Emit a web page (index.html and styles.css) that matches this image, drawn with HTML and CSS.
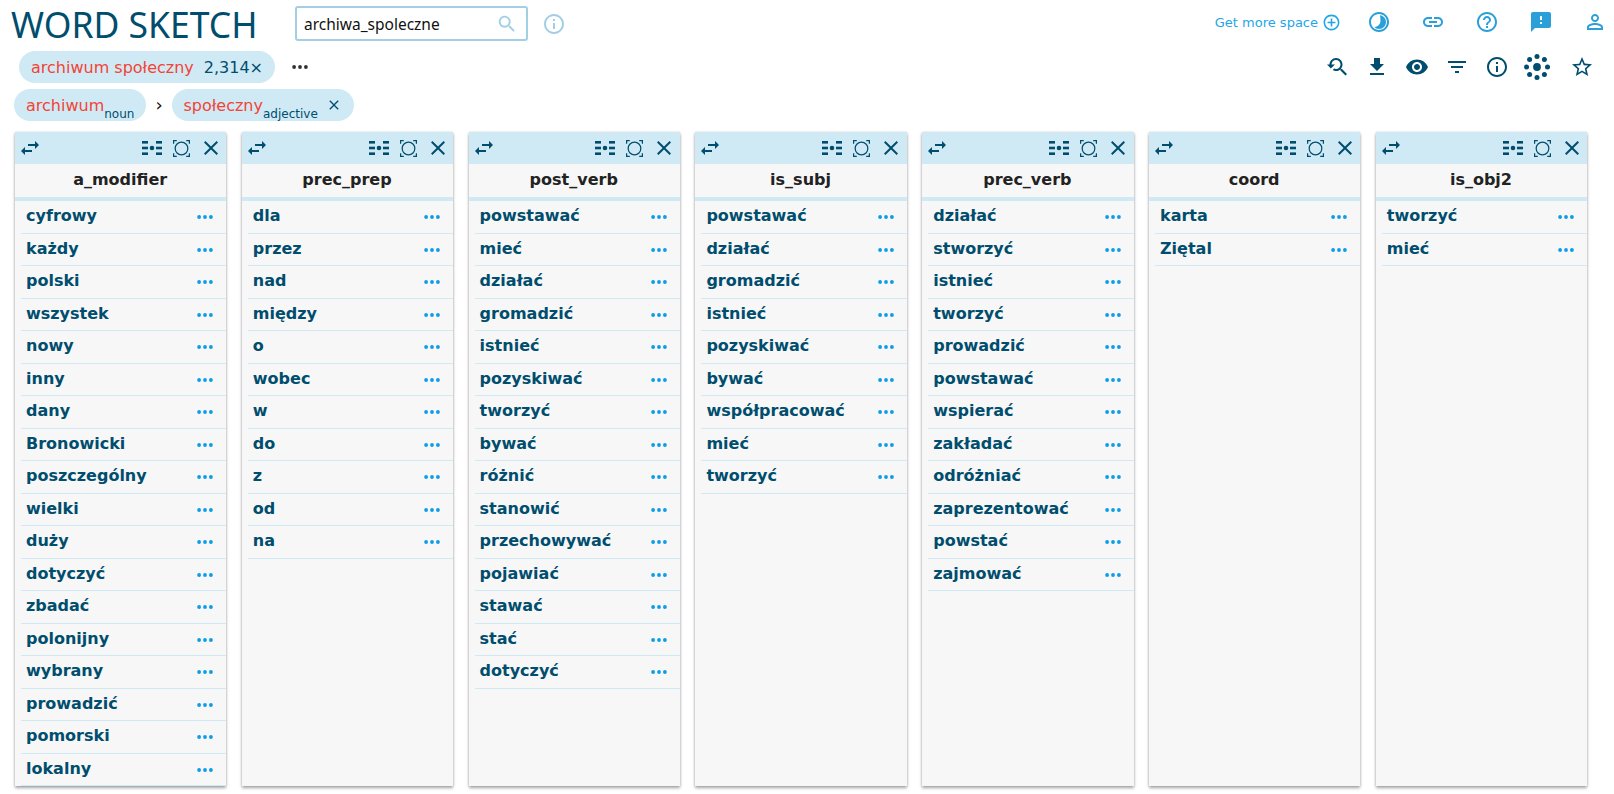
FILE: index.html
```html
<!DOCTYPE html>
<html lang="pl">
<head>
<meta charset="utf-8">
<title>Word Sketch</title>
<link rel="stylesheet" href="styles.css">
</head>
<body>
<svg class="defs" width="0" height="0">
  <symbol id="i-search" viewBox="0 0 24 24"><path d="M15.5 14h-.79l-.28-.27C15.41 12.59 16 11.11 16 9.5 16 5.91 13.09 3 9.5 3S3 5.91 3 9.5 5.91 16 9.5 16c1.61 0 3.09-.59 4.23-1.57l.27.28v.79l5 4.99L20.49 19l-4.99-5zm-6 0C7.01 14 5 11.99 5 9.5S7.01 5 9.5 5 14 7.01 14 9.5 11.99 14 9.5 14z"/></symbol>
  <symbol id="i-info" viewBox="0 0 24 24"><path d="M11 7h2v2h-2zm0 4h2v6h-2zm1-9C6.48 2 2 6.48 2 12s4.48 10 10 10 10-4.48 10-10S17.52 2 12 2zm0 18c-4.41 0-8-3.59-8-8s3.59-8 8-8 8 3.59 8 8-3.59 8-8 8z"/></symbol>
  <symbol id="i-add" viewBox="0 0 24 24"><path d="M13 7h-2v4H7v2h4v4h2v-4h4v-2h-4V7zm-1-5C6.48 2 2 6.48 2 12s4.48 10 10 10 10-4.48 10-10S17.52 2 12 2zm0 18c-4.41 0-8-3.59-8-8s3.59-8 8-8 8 3.59 8 8-3.59 8-8 8z"/></symbol>
  <symbol id="i-moon" viewBox="0 0 24 24"><path d="M12 2C6.48 2 2 6.48 2 12s4.48 10 10 10 10-4.48 10-10S17.52 2 12 2zm0 18c-4.41 0-8-3.59-8-8s3.59-8 8-8 8 3.59 8 8-3.59 8-8 8z"/><path d="M13 5.2c3.5.5 6 3.4 6 6.8 0 3.900-3.100 7-7 7-1.900 0-3.600-.7-4.900-1.900 3.500 0 6.400-2.800 6.400-6.300 0-2-.3-3.900-.5-5.600z"/></symbol>
  <symbol id="i-link" viewBox="0 0 24 24"><path d="M3.9 12c0-1.710 1.390-3.100 3.100-3.100h4V7H7c-2.760 0-5 2.240-5 5s2.240 5 5 5h4v-1.900H7c-1.710 0-3.100-1.390-3.100-3.100zM8 13h8v-2H8v2zm9-6h-4v1.900h4c1.710 0 3.100 1.390 3.100 3.100s-1.390 3.100-3.100 3.100h-4V17h4c2.760 0 5-2.240 5-5s-2.240-5-5-5z"/></symbol>
  <symbol id="i-help" viewBox="0 0 24 24"><path d="M11 18h2v-2h-2v2zm1-16C6.480 2 2 6.480 2 12s4.480 10 10 10 10-4.480 10-10S17.520 2 12 2zm0 18c-4.410 0-8-3.590-8-8s3.590-8 8-8 8 3.590 8 8-3.590 8-8 8zm0-14c-2.210 0-4 1.790-4 4h2c0-1.100.9-2 2-2s2 .9 2 2c0 2-3 1.750-3 5h2c0-2.250 3-2.500 3-5 0-2.210-1.790-4-4-4z"/></symbol>
  <symbol id="i-feedback" viewBox="0 0 24 24"><path d="M20 2H4c-1.100 0-1.990.9-1.990 2L2 22l4-4h14c1.100 0 2-.9 2-2V4c0-1.100-.9-2-2-2zm-7 12h-2v-2h2v2zm0-4h-2V6h2v4z"/></symbol>
  <symbol id="i-person" viewBox="0 0 24 24"><path d="M12 5.900c1.160 0 2.100.94 2.100 2.100s-.94 2.100-2.100 2.100S9.900 9.160 9.900 8s.94-2.100 2.100-2.100m0 9c2.970 0 6.100 1.460 6.100 2.100v1.100H5.900V17c0-.64 3.130-2.100 6.100-2.100M12 4C9.790 4 8 5.790 8 8s1.790 4 4 4 4-1.790 4-4-1.790-4-4-4zm0 9c-2.670 0-8 1.340-8 4v3h16v-3c0-2.660-5.330-4-8-4z"/></symbol>
  <symbol id="i-back" viewBox="0 0 24 24"><path d="M17.010 14h-.8l-.27-.27c.98-1.140 1.570-2.610 1.570-4.230 0-3.590-2.910-6.500-6.500-6.500s-6.500 3-6.500 6.500H2l3.840 4 4.160-4H6.510C6.510 7 8.530 5 11.010 5s4.500 2.010 4.500 4.500c0 2.480-2.020 4.500-4.500 4.500-.65 0-1.260-.14-1.820-.38L7.710 15.100c.97.57 2.090.9 3.300.9 1.610 0 3.080-.59 4.220-1.570l.27.27v.79l5.010 5L22 19l-4.990-5z"/></symbol>
  <symbol id="i-download" viewBox="0 0 24 24"><path d="M5 20h14v-2H5v2zM19 9h-4V3H9v6H5l7 7 7-7z"/></symbol>
  <symbol id="i-eye" viewBox="0 0 24 24"><path d="M12 4.500C7 4.500 2.730 7.610 1 12c1.730 4.390 6 7.500 11 7.500s9.270-3.110 11-7.500c-1.730-4.390-6-7.500-11-7.500zM12 17c-2.760 0-5-2.240-5-5s2.240-5 5-5 5 2.240 5 5-2.240 5-5 5zm0-8c-1.660 0-3 1.340-3 3s1.340 3 3 3 3-1.340 3-3-1.340-3-3-3z"/></symbol>
  <symbol id="i-filter" viewBox="0 0 24 24"><path d="M10 18h4v-2h-4v2zM3 6v2h18V6H3zm3 7h12v-2H6v2z"/></symbol>
  <symbol id="i-star" viewBox="0 0 24 24"><path d="M22 9.240l-7.190-.62L12 2 9.190 8.630 2 9.240l5.460 4.730L5.820 21 12 17.270 18.180 21l-1.630-7.030L22 9.240zM12 15.400l-3.760 2.270 1-4.280-3.320-2.880 4.380-.38L12 6.100l1.710 4.040 4.380.38-3.320 2.880 1 4.280L12 15.400z"/></symbol>
  <symbol id="i-bubble" viewBox="0 0 28 28"><circle cx="14" cy="14" r="3.900"/><circle cx="14" cy="3.500" r="2.500"/><circle cx="14" cy="24.500" r="2.500"/><circle cx="3.500" cy="14" r="2.500"/><circle cx="24.500" cy="14" r="2.500"/><circle cx="6.600" cy="6.600" r="2.500"/><circle cx="21.400" cy="6.600" r="2.500"/><circle cx="6.600" cy="21.400" r="2.500"/><circle cx="21.400" cy="21.400" r="2.500"/></symbol>
  <symbol id="i-swap" viewBox="0 0 24 24"><path d="M6.990 11L3 15l3.990 4v-3H14v-2H6.990v-3zM21 9l-3.990-4v3H10v2h7.010v3L21 9z"/></symbol>
  <symbol id="i-close" viewBox="0 0 24 24"><path d="M19 6.410L17.590 5 12 10.590 6.410 5 5 6.410 10.590 12 5 17.590 6.410 19 12 13.410 17.590 19 19 17.590 13.410 12z"/></symbol>
  <symbol id="i-cluster" viewBox="0 0 20 16"><rect x="0" y="1" width="6" height="2.600"/><rect x="0" y="6.700" width="6" height="2.600"/><rect x="0" y="12.400" width="6" height="2.600"/><rect x="14" y="1" width="6" height="2.600"/><rect x="14" y="6.700" width="6" height="2.600"/><rect x="14" y="12.400" width="6" height="2.600"/><circle cx="10" cy="8" r="2.300"/></symbol>
  <symbol id="i-focus" viewBox="0 0 18 18"><circle cx="9" cy="9" r="6.700" fill="none" stroke="currentColor" stroke-width="1.300"/><path d="M0 0h4v1.300H1.300V4H0zM14 0h4v4h-1.300V1.300H14zM0 14h1.300v2.700H4V18H0zM16.700 14H18v4h-4v-1.300h2.700z"/></symbol>
  <symbol id="i-dots" viewBox="0 0 16 4"><circle cx="2.100" cy="2" r="1.900"/><circle cx="8" cy="2" r="1.900"/><circle cx="13.900" cy="2" r="1.900"/></symbol>
</svg>

<header class="top">
  <h1 class="title">WORD SKETCH</h1>
  <div class="search">
    <span class="search-text">archiwa_spoleczne</span>
    <svg class="ic ic-search"><use href="#i-search"/></svg>
  </div>
  <svg class="ic ic-hint"><use href="#i-info"/></svg>
  <nav class="top-nav">
    <a class="space">Get more space <svg class="ic ic-add"><use href="#i-add"/></svg></a>
    <span class="nav-cell"><svg class="ic ic-nav"><use href="#i-moon"/></svg></span>
    <span class="nav-cell"><svg class="ic ic-nav"><use href="#i-link"/></svg></span>
    <span class="nav-cell"><svg class="ic ic-nav"><use href="#i-help"/></svg></span>
    <span class="nav-cell"><svg class="ic ic-nav ic-fb"><use href="#i-feedback"/></svg></span>
    <span class="nav-cell"><svg class="ic ic-nav"><use href="#i-person"/></svg></span>
  </nav>
</header>

<div class="bar">
  <div class="chip chip-main">
    <span class="red">archiwum społeczny</span>
    <span class="count">2,314</span><span class="times">×</span>
  </div>
  <svg class="more"><use href="#i-dots"/></svg>
  <div class="tools">
    <svg class="ic ic-tool"><use href="#i-back"/></svg>
    <svg class="ic ic-tool"><use href="#i-download"/></svg>
    <svg class="ic ic-tool"><use href="#i-eye"/></svg>
    <svg class="ic ic-tool"><use href="#i-filter"/></svg>
    <svg class="ic ic-tool"><use href="#i-info"/></svg>
    <svg class="ic ic-bubble"><use href="#i-bubble"/></svg>
    <svg class="ic ic-tool ic-star"><use href="#i-star"/></svg>
  </div>
</div>

<div class="crumbs">
  <div class="chip chip-a"><span class="red">archiwum</span><sub class="pos">noun</sub></div>
  <span class="chev">›</span>
  <div class="chip chip-b"><span class="red">społeczny</span><sub class="pos">adjective</sub><svg class="ic ic-x"><use href="#i-close"/></svg></div>
</div>

<main class="cols" id="cols">
  <section class="col">
    <div class="col-head"><svg class="ic ic-swap"><use href="#i-swap"/></svg><svg class="ic ic-cluster"><use href="#i-cluster"/></svg><svg class="ic ic-focus"><use href="#i-focus"/></svg><svg class="ic ic-close"><use href="#i-close"/></svg></div>
    <h2 class="col-title">a_modifier</h2>
    <ul class="rows">
      <li class="row"><span>cyfrowy</span><svg class="dots"><use href="#i-dots"/></svg></li>
      <li class="row"><span>każdy</span><svg class="dots"><use href="#i-dots"/></svg></li>
      <li class="row"><span>polski</span><svg class="dots"><use href="#i-dots"/></svg></li>
      <li class="row"><span>wszystek</span><svg class="dots"><use href="#i-dots"/></svg></li>
      <li class="row"><span>nowy</span><svg class="dots"><use href="#i-dots"/></svg></li>
      <li class="row"><span>inny</span><svg class="dots"><use href="#i-dots"/></svg></li>
      <li class="row"><span>dany</span><svg class="dots"><use href="#i-dots"/></svg></li>
      <li class="row"><span>Bronowicki</span><svg class="dots"><use href="#i-dots"/></svg></li>
      <li class="row"><span>poszczególny</span><svg class="dots"><use href="#i-dots"/></svg></li>
      <li class="row"><span>wielki</span><svg class="dots"><use href="#i-dots"/></svg></li>
      <li class="row"><span>duży</span><svg class="dots"><use href="#i-dots"/></svg></li>
      <li class="row"><span>dotyczyć</span><svg class="dots"><use href="#i-dots"/></svg></li>
      <li class="row"><span>zbadać</span><svg class="dots"><use href="#i-dots"/></svg></li>
      <li class="row"><span>polonijny</span><svg class="dots"><use href="#i-dots"/></svg></li>
      <li class="row"><span>wybrany</span><svg class="dots"><use href="#i-dots"/></svg></li>
      <li class="row"><span>prowadzić</span><svg class="dots"><use href="#i-dots"/></svg></li>
      <li class="row"><span>pomorski</span><svg class="dots"><use href="#i-dots"/></svg></li>
      <li class="row"><span>lokalny</span><svg class="dots"><use href="#i-dots"/></svg></li>
    </ul>
  </section>
  <section class="col">
    <div class="col-head"><svg class="ic ic-swap"><use href="#i-swap"/></svg><svg class="ic ic-cluster"><use href="#i-cluster"/></svg><svg class="ic ic-focus"><use href="#i-focus"/></svg><svg class="ic ic-close"><use href="#i-close"/></svg></div>
    <h2 class="col-title">prec_prep</h2>
    <ul class="rows">
      <li class="row"><span>dla</span><svg class="dots"><use href="#i-dots"/></svg></li>
      <li class="row"><span>przez</span><svg class="dots"><use href="#i-dots"/></svg></li>
      <li class="row"><span>nad</span><svg class="dots"><use href="#i-dots"/></svg></li>
      <li class="row"><span>między</span><svg class="dots"><use href="#i-dots"/></svg></li>
      <li class="row"><span>o</span><svg class="dots"><use href="#i-dots"/></svg></li>
      <li class="row"><span>wobec</span><svg class="dots"><use href="#i-dots"/></svg></li>
      <li class="row"><span>w</span><svg class="dots"><use href="#i-dots"/></svg></li>
      <li class="row"><span>do</span><svg class="dots"><use href="#i-dots"/></svg></li>
      <li class="row"><span>z</span><svg class="dots"><use href="#i-dots"/></svg></li>
      <li class="row"><span>od</span><svg class="dots"><use href="#i-dots"/></svg></li>
      <li class="row"><span>na</span><svg class="dots"><use href="#i-dots"/></svg></li>
    </ul>
  </section>
  <section class="col">
    <div class="col-head"><svg class="ic ic-swap"><use href="#i-swap"/></svg><svg class="ic ic-cluster"><use href="#i-cluster"/></svg><svg class="ic ic-focus"><use href="#i-focus"/></svg><svg class="ic ic-close"><use href="#i-close"/></svg></div>
    <h2 class="col-title">post_verb</h2>
    <ul class="rows">
      <li class="row"><span>powstawać</span><svg class="dots"><use href="#i-dots"/></svg></li>
      <li class="row"><span>mieć</span><svg class="dots"><use href="#i-dots"/></svg></li>
      <li class="row"><span>działać</span><svg class="dots"><use href="#i-dots"/></svg></li>
      <li class="row"><span>gromadzić</span><svg class="dots"><use href="#i-dots"/></svg></li>
      <li class="row"><span>istnieć</span><svg class="dots"><use href="#i-dots"/></svg></li>
      <li class="row"><span>pozyskiwać</span><svg class="dots"><use href="#i-dots"/></svg></li>
      <li class="row"><span>tworzyć</span><svg class="dots"><use href="#i-dots"/></svg></li>
      <li class="row"><span>bywać</span><svg class="dots"><use href="#i-dots"/></svg></li>
      <li class="row"><span>różnić</span><svg class="dots"><use href="#i-dots"/></svg></li>
      <li class="row"><span>stanowić</span><svg class="dots"><use href="#i-dots"/></svg></li>
      <li class="row"><span>przechowywać</span><svg class="dots"><use href="#i-dots"/></svg></li>
      <li class="row"><span>pojawiać</span><svg class="dots"><use href="#i-dots"/></svg></li>
      <li class="row"><span>stawać</span><svg class="dots"><use href="#i-dots"/></svg></li>
      <li class="row"><span>stać</span><svg class="dots"><use href="#i-dots"/></svg></li>
      <li class="row"><span>dotyczyć</span><svg class="dots"><use href="#i-dots"/></svg></li>
    </ul>
  </section>
  <section class="col">
    <div class="col-head"><svg class="ic ic-swap"><use href="#i-swap"/></svg><svg class="ic ic-cluster"><use href="#i-cluster"/></svg><svg class="ic ic-focus"><use href="#i-focus"/></svg><svg class="ic ic-close"><use href="#i-close"/></svg></div>
    <h2 class="col-title">is_subj</h2>
    <ul class="rows">
      <li class="row"><span>powstawać</span><svg class="dots"><use href="#i-dots"/></svg></li>
      <li class="row"><span>działać</span><svg class="dots"><use href="#i-dots"/></svg></li>
      <li class="row"><span>gromadzić</span><svg class="dots"><use href="#i-dots"/></svg></li>
      <li class="row"><span>istnieć</span><svg class="dots"><use href="#i-dots"/></svg></li>
      <li class="row"><span>pozyskiwać</span><svg class="dots"><use href="#i-dots"/></svg></li>
      <li class="row"><span>bywać</span><svg class="dots"><use href="#i-dots"/></svg></li>
      <li class="row"><span>współpracować</span><svg class="dots"><use href="#i-dots"/></svg></li>
      <li class="row"><span>mieć</span><svg class="dots"><use href="#i-dots"/></svg></li>
      <li class="row"><span>tworzyć</span><svg class="dots"><use href="#i-dots"/></svg></li>
    </ul>
  </section>
  <section class="col">
    <div class="col-head"><svg class="ic ic-swap"><use href="#i-swap"/></svg><svg class="ic ic-cluster"><use href="#i-cluster"/></svg><svg class="ic ic-focus"><use href="#i-focus"/></svg><svg class="ic ic-close"><use href="#i-close"/></svg></div>
    <h2 class="col-title">prec_verb</h2>
    <ul class="rows">
      <li class="row"><span>działać</span><svg class="dots"><use href="#i-dots"/></svg></li>
      <li class="row"><span>stworzyć</span><svg class="dots"><use href="#i-dots"/></svg></li>
      <li class="row"><span>istnieć</span><svg class="dots"><use href="#i-dots"/></svg></li>
      <li class="row"><span>tworzyć</span><svg class="dots"><use href="#i-dots"/></svg></li>
      <li class="row"><span>prowadzić</span><svg class="dots"><use href="#i-dots"/></svg></li>
      <li class="row"><span>powstawać</span><svg class="dots"><use href="#i-dots"/></svg></li>
      <li class="row"><span>wspierać</span><svg class="dots"><use href="#i-dots"/></svg></li>
      <li class="row"><span>zakładać</span><svg class="dots"><use href="#i-dots"/></svg></li>
      <li class="row"><span>odróżniać</span><svg class="dots"><use href="#i-dots"/></svg></li>
      <li class="row"><span>zaprezentować</span><svg class="dots"><use href="#i-dots"/></svg></li>
      <li class="row"><span>powstać</span><svg class="dots"><use href="#i-dots"/></svg></li>
      <li class="row"><span>zajmować</span><svg class="dots"><use href="#i-dots"/></svg></li>
    </ul>
  </section>
  <section class="col">
    <div class="col-head"><svg class="ic ic-swap"><use href="#i-swap"/></svg><svg class="ic ic-cluster"><use href="#i-cluster"/></svg><svg class="ic ic-focus"><use href="#i-focus"/></svg><svg class="ic ic-close"><use href="#i-close"/></svg></div>
    <h2 class="col-title">coord</h2>
    <ul class="rows">
      <li class="row"><span>karta</span><svg class="dots"><use href="#i-dots"/></svg></li>
      <li class="row"><span>Ziętal</span><svg class="dots"><use href="#i-dots"/></svg></li>
    </ul>
  </section>
  <section class="col">
    <div class="col-head"><svg class="ic ic-swap"><use href="#i-swap"/></svg><svg class="ic ic-cluster"><use href="#i-cluster"/></svg><svg class="ic ic-focus"><use href="#i-focus"/></svg><svg class="ic ic-close"><use href="#i-close"/></svg></div>
    <h2 class="col-title">is_obj2</h2>
    <ul class="rows">
      <li class="row"><span>tworzyć</span><svg class="dots"><use href="#i-dots"/></svg></li>
      <li class="row"><span>mieć</span><svg class="dots"><use href="#i-dots"/></svg></li>
    </ul>
  </section>
</main>
</body>
</html>
```

FILE: styles.css
```css
* { box-sizing: border-box; }
html, body { margin: 0; padding: 0; }
body {
  height: 794px;
  overflow: hidden;
  background: #fff;
  font-family: "DejaVu Sans", sans-serif;
  color: #004d6e;
}
.defs { position: absolute; }
.ic { display: block; fill: currentColor; flex: none; }

.top { display: flex; align-items: center; height: 47px; padding-left: 11px; }
.title {
  margin: 0;
  width: 284px;
  font: 400 35.500px/46px "Noto Sans", sans-serif;
  color: #004d6e;
  white-space: nowrap;
}
.search {
  width: 233px;
  height: 35px;
  display: flex;
  align-items: center;
  justify-content: space-between;
  padding: 0 8px 0 7px;
  border: 2px solid #a3cfe4;
  border-radius: 3px;
}
.search-text { font: 400 15.500px "Noto Sans", sans-serif; color: #111; }
.ic-search { width: 22px; height: 22px; color: #a3cfe4; }
.ic-hint { width: 24px; height: 24px; margin-left: 14px; color: #a3cfe4; }
.top-nav { display: flex; align-items: center; margin-left: auto; margin-bottom: 3px; padding-right: 7px; }
.space { display: flex; align-items: center; gap: 4px; font-size: 13px; color: #1ea5ea; }
.ic-add { width: 19px; height: 19px; color: #1ea5ea; }
.nav-cell { width: 24px; margin-left: 30px; }
.space + .nav-cell { margin-left: 26px; }
.ic-nav { width: 24px; height: 24px; color: #2a9fd8; }

.bar { display: flex; align-items: center; height: 32px; margin-top: 4px; padding-left: 19px; }
.chip { display: flex; align-items: center; height: 32px; border-radius: 16px; background: #cfeaf4; font-size: 16px; white-space: nowrap; }
.red { color: #f44336; }
.chip-main { width: 256px; padding-left: 12px; }
.count { margin-left: 10px; color: #004d6e; }
.times { font-size: 16px; color: #004d6e; }
.more { width: 16px; height: 4px; margin-left: 17px; fill: #333; }
.tools { display: flex; align-items: center; margin-left: auto; padding-right: 20px; gap: 16px; }
.ic-tool { width: 24px; height: 24px; }
.ic-bubble { width: 28px; height: 28px; margin: 0 -2px; }
.ic-star { margin-left: 5px; }

.crumbs { display: flex; align-items: center; height: 32px; margin-top: 6px; padding-left: 14px; }
.chip-a { width: 132px; padding-left: 12px; }
.chev { width: 26px; text-align: center; font-size: 18px; line-height: 24px; color: #111; }
.chip-b { width: 182px; padding-left: 11.500px; }
.pos { font-size: 12px; align-self: flex-end; line-height: 14px; margin-bottom: 0; color: #004d6e; }
.ic-x { width: 16px; height: 16px; margin-left: 8.500px; }

.cols {
  display: grid;
  grid-template-columns: repeat(7, 1fr);
  gap: 15.500px;
  height: 654px;
  margin-top: 11px;
  padding: 0 26.900px 0 15px;
}
.col {
  display: flex;
  flex-direction: column;
  min-width: 0;
  background: #f7f7f7;
  box-shadow: 0 2px 3px rgba(0, 0, 0, .35), 0 0 2px rgba(0, 0, 0, .12);
}
.col-head {
  display: flex;
  align-items: center;
  height: 32px;
  padding: 0 3.500px 0 3px;
  background: #cfeaf4;
  flex: none;
}
.ic-swap { width: 24px; height: 24px; }
.ic-cluster { width: 20px; height: 16px; margin-left: auto; }
.ic-focus { width: 17px; height: 17px; margin-left: 11px; }
.ic-close { width: 24px; height: 24px; margin-left: 9px; }
.col-title {
  margin: 0;
  height: 37px;
  flex: none;
  padding-right: 1px;
  text-align: center;
  font: 700 16px/31px "DejaVu Sans", sans-serif;
  color: #222;
  border-bottom: 4px solid #cfeaf4;
}
.rows { margin: 0; padding: 0 0 0 6px; list-style: none; flex: 1; min-height: 0; }
.row {
  display: flex;
  align-items: center;
  justify-content: space-between;
  height: 32.500px;
  padding: 0 13px 2px 5px;
  border-bottom: 1px solid #cfeaf4;
  font-weight: 700;
  font-size: 16px;
}
.dots { width: 16px; height: 4px; fill: #0b9de8; margin-top: 3px; }
```
